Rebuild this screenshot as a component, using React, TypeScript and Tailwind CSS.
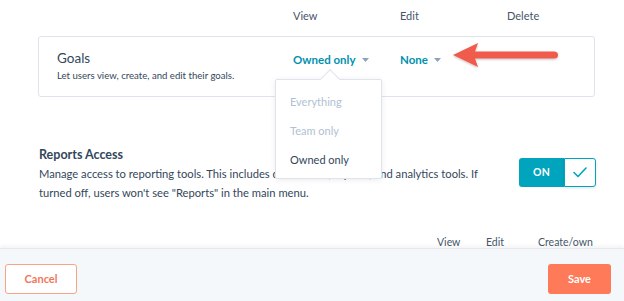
import React from "react";

function Caret() {
  return (
    <svg width="7" height="4" viewBox="0 0 7 4" className="ml-[6px] mt-[1px]">
      <path d="M0 0 L7 0 L3.5 4 Z" fill="#8fa3b8" />
    </svg>
  );
}

export default function App() {
  return (
    <div
      className="relative w-[624px] h-[301px] overflow-hidden bg-white flex flex-col text-[#33475b]"
      style={{ fontFamily: "Lato, 'Open Sans', Arial, sans-serif" }}
    >
      {/* column headers */}
      <div className="flex h-[36px] pl-[293px] pt-[8px] text-[11px] text-[#46566a]">
        <div className="w-[107px]">View</div>
        <div className="w-[107px]">Edit</div>
        <div>Delete</div>
      </div>

      {/* Goals box */}
      <div className="ml-[38px] w-[557px] h-[61px] border border-[#dfe3eb] rounded-[3px] flex items-start">
        <div className="w-[254px] pl-[18px] pt-[12px]">
          <div className="text-[13.5px] leading-[18px]">Goals</div>
          <div className="text-[9.6px] leading-[14px] mt-[2px]">Let users view, create, and edit their goals.</div>
        </div>
        <div className="w-[107px] pt-[14px] flex items-center text-[11.5px] font-bold text-[#0091ae]">
          Owned only
          <Caret />
        </div>
        <div className="pt-[14px] flex items-center text-[11.5px] font-bold text-[#0091ae]">
          None
          <Caret />
        </div>
      </div>

      {/* Reports access */}
      <div className="flex ml-[39px] mt-[49px] w-[557px]">
        <div className="w-[450px]">
          <div className="text-[12.5px] font-bold leading-[17px]">Reports Access</div>
          <div className="text-[11.2px] leading-[19px] mt-[1px]">
            Manage access to reporting tools. This includes dashboards, reports, and analytics tools. If turned off, users won't see "Reports" in the main menu.
          </div>
        </div>
        <div className="ml-auto mt-[12px] flex h-[29px]">
          <div className="w-[45px] bg-[#00a4bd] rounded-l-[3px] flex items-center justify-center text-white text-[10.5px] font-bold tracking-wide">
            ON
          </div>
          <div className="w-[32px] bg-white border border-[#00a4bd] rounded-r-[3px] flex items-center justify-center shadow-[0_1px_3px_rgba(0,0,0,0.12)]">
            <svg width="14" height="11" viewBox="0 0 14 11">
              <path d="M1 5.5 L5 9.5 L13 1" fill="none" stroke="#00a4bd" strokeWidth="1.6" strokeLinecap="round" strokeLinejoin="round" />
            </svg>
          </div>
        </div>
      </div>

      {/* Lower headers */}
      <div className="flex mt-auto pl-[437px] text-[10.5px] text-[#46566a] leading-[13px] mb-[-1px]">
        <div className="w-[49px]">View</div>
        <div className="w-[52px]">Edit</div>
        <div>Create/own</div>
      </div>

      {/* Footer */}
      <div className="h-[53px] bg-[#f5f8fa] border-t border-[#e5e9ee] shadow-[0_-2px_4px_rgba(0,0,0,0.05)] flex items-start justify-between px-[5px] pt-[15px] pr-[13px]">
        <button className="w-[72px] h-[30px] bg-white border border-[#f8a28a] rounded-[3px] text-[#f2765b] text-[11px] font-bold">
          Cancel
        </button>
        <button className="w-[63px] h-[30px] bg-[#ff7a59] rounded-[3px] text-white text-[11px] font-bold">
          Save
        </button>
      </div>

      {/* Dropdown menu overlay */}
      <div className="absolute left-[275px] top-[79px] w-[107px] h-[100px] bg-white border border-[#dfe3eb] rounded-[2px] shadow-[0_1px_6px_rgba(0,0,0,0.08)]">
        <div className="absolute left-[47px] top-[-8px] w-[14px] h-[14px] bg-white border-l border-t border-[#dfe3eb] rotate-45" />
        <div className="relative flex flex-col pl-[14px] pt-[14px] text-[11px] leading-[15px]">
          <div className="text-[#b0c1d4] h-[29px]">Everything</div>
          <div className="text-[#b0c1d4] h-[29px]">Team only</div>
          <div className="text-[#33475b]">Owned only</div>
        </div>
      </div>

      {/* Annotation arrow */}
      <svg className="absolute left-[450px] top-[41px]" width="112" height="30" viewBox="0 0 112 30">
        <defs>
          <filter id="sh" x="-10%" y="-30%" width="120%" height="160%">
            <feDropShadow dx="0" dy="1" stdDeviation="1" floodColor="#000" floodOpacity="0.25" />
          </filter>
        </defs>
        <g filter="url(#sh)">
          <path d="M3 14 L28 2 L25 10.5 L104 10.5 Q108 10.5 108 14 Q108 17.5 104 17.5 L25 17.5 L28 26 Z" fill="#ef5b4c" />
        </g>
      </svg>
    </div>
  );
}
